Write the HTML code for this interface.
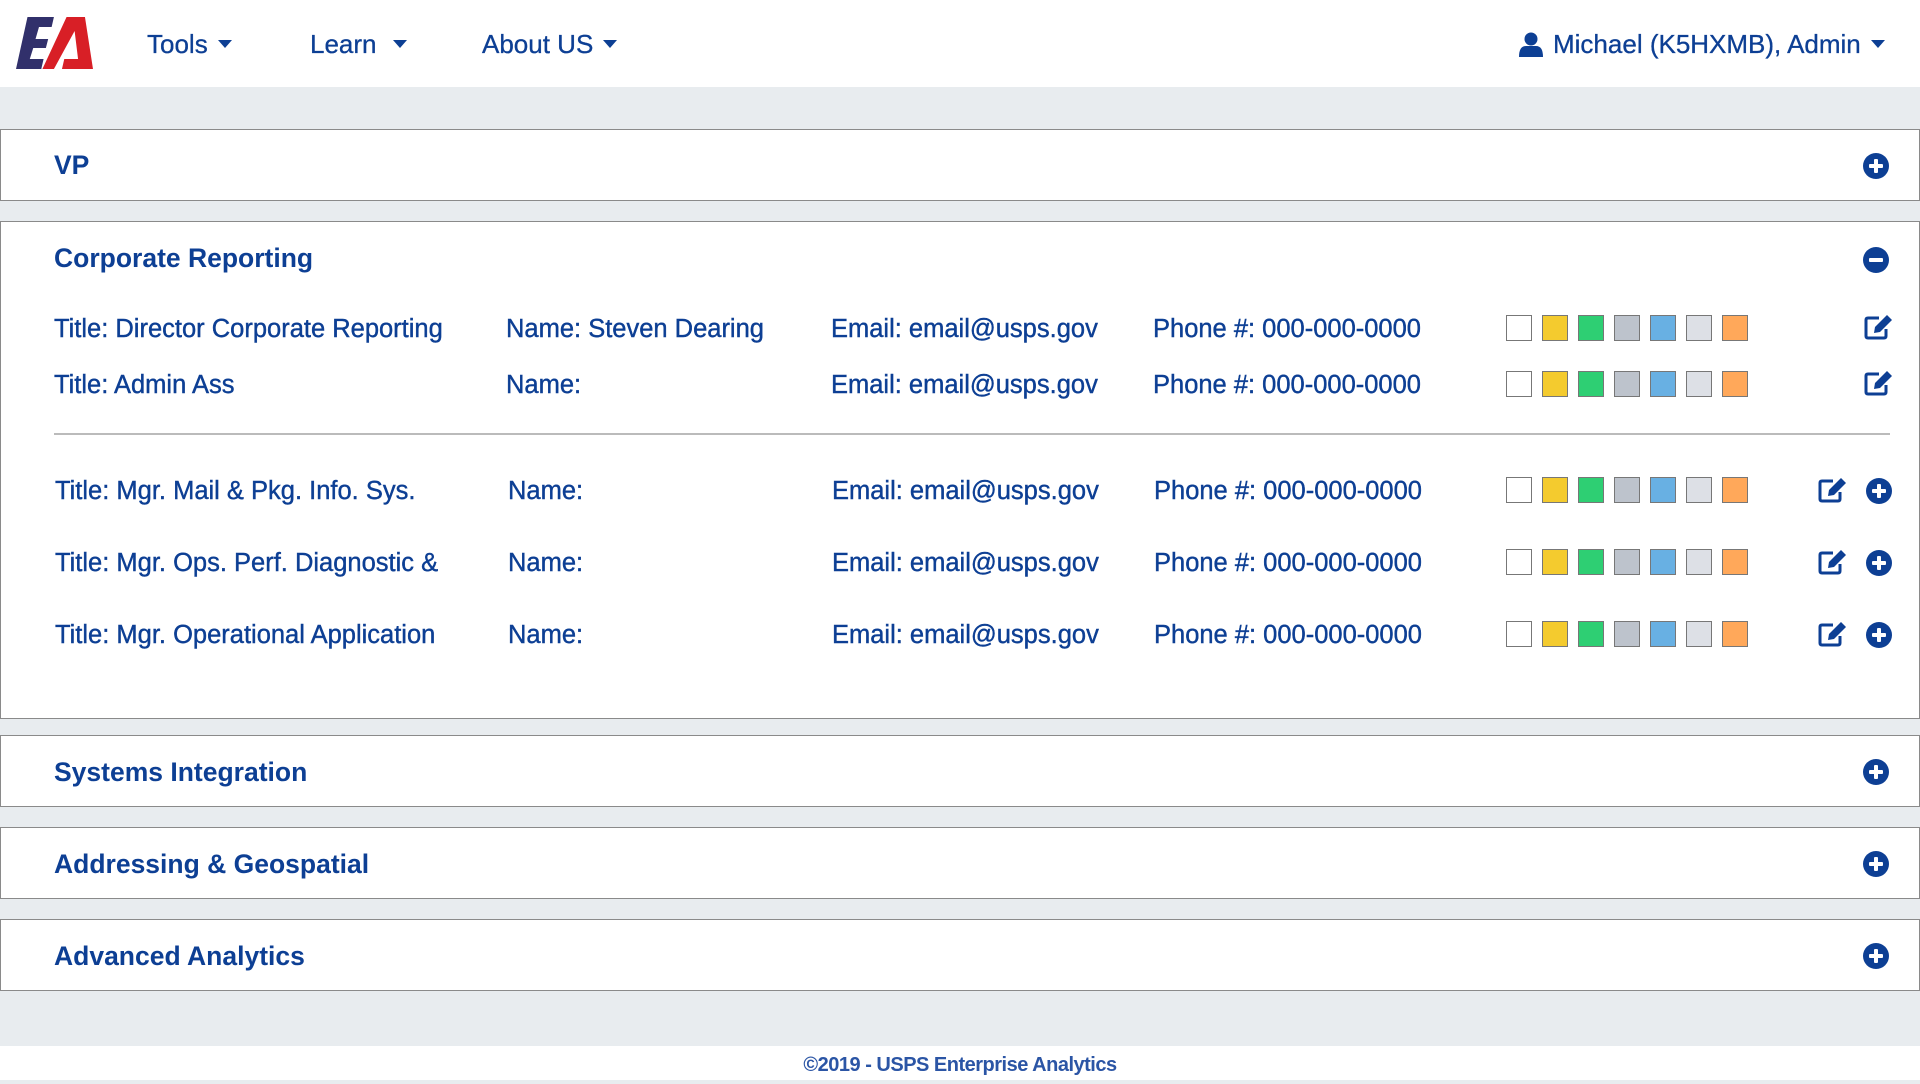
<!DOCTYPE html>
<html><head><meta charset="utf-8"><style>
*{margin:0;padding:0;box-sizing:border-box}
body{width:1920px;height:1080px;background:#e8ecef;font-family:"Liberation Sans",sans-serif;color:#0d3f94;position:relative;overflow:hidden}
.a{position:absolute;white-space:nowrap}
.nav{position:absolute;left:0;top:0;width:1920px;height:87px;background:#fff}
.nv{font-size:26px;top:29px;-webkit-text-stroke:0.3px #0d3f94}
.car{display:inline-block;width:0;height:0;border-left:7px solid transparent;border-right:7px solid transparent;border-top:8px solid #0d3f94;vertical-align:middle;margin-left:10px;position:relative;top:-2px}
.panel{position:absolute;left:0;width:1920px;background:#fff;border:1px solid #8a8a8a}
.h{font-size:26.5px;font-weight:bold;left:54px}
.r{font-size:25.5px;-webkit-text-stroke:0.4px #0d3f94}
.sw{position:absolute;width:26px;height:26px;border:1px solid #777}
.foot{position:absolute;left:0;top:1046px;width:1920px;height:34px;background:#fff;text-align:center;font-size:20px;font-weight:bold;line-height:38px;color:#2b55a5;letter-spacing:-0.5px}
</style></head><body>
<div class="nav"></div>
<svg class="a" style="left:16px;top:17px" width="77" height="52" viewBox="0 0 67 52" preserveAspectRatio="none">
<polygon points="10,0 33,0 31,10 20,10 17,22 28,22 26,31 15,31 12,42 24,42 22,52 0,52" fill="#31306b"/>
<polygon points="44,0 60,0 67,52 40,52 42,42 54,42 51,14 33,52 23,52" fill="#d81f26"/>
</svg>
<div class="a nv" style="left:147px">Tools<span class="car"></span></div>
<div class="a nv" style="left:310px">Learn<span class="car" style="margin-left:16px"></span></div>
<div class="a nv" style="left:482px">About US<span class="car"></span></div>
<svg class="a" style="left:1519px;top:32px" width="24" height="25" viewBox="0 0 24 25"><circle cx="12" cy="7" r="6.5" fill="#0d3f94"/><path d="M0 25 Q0 14 7 14 L17 14 Q24 14 24 25 Z" fill="#0d3f94"/></svg>
<div class="a nv" style="left:1553px;top:29px">Michael (K5HXMB), Admin<span class="car"></span></div>

<svg width="0" height="0" style="position:absolute"><defs>
<symbol id="plus" viewBox="0 0 26 26"><circle cx="13" cy="13" r="13" fill="#0d3f94"/><rect x="6" y="11" width="14" height="4" rx="1" fill="#fff"/><rect x="11" y="6" width="4" height="14" rx="1" fill="#fff"/></symbol>
<symbol id="minus" viewBox="0 0 26 26"><circle cx="13" cy="13" r="13" fill="#0d3f94"/><rect x="6" y="11" width="14" height="4" rx="1" fill="#fff"/></symbol>
<symbol id="edit" viewBox="0 0 30 26"><path d="M15 4 H4 Q2 4 2 6 V22 Q2 24 4 24 H20 Q22 24 22 22 V15" fill="none" stroke="#0d3f94" stroke-width="3"/><path d="M11 13 L23 1 L28 6 L16 18 L10 19 Z" fill="#0d3f94"/></symbol>
</defs></svg>

<div class="panel" style="top:129px;height:72px"></div>
<div class="a h" style="top:150px">VP</div>
<svg class="a" style="left:1863px;top:153px" width="26" height="26"><use href="#plus"/></svg>

<div class="panel" style="top:221px;height:498px"></div>
<div class="a h" style="top:243px">Corporate Reporting</div>
<svg class="a" style="left:1863px;top:247px" width="26" height="26"><use href="#minus"/></svg>
<div class="a" style="left:54px;top:433px;width:1836px;height:2px;background:#bbb"></div>

<div class="panel" style="top:735px;height:72px"></div>
<div class="a h" style="top:757px">Systems Integration</div>
<svg class="a" style="left:1863px;top:759px" width="26" height="26"><use href="#plus"/></svg>
<div class="panel" style="top:827px;height:72px"></div>
<div class="a h" style="top:849px">Addressing &amp; Geospatial</div>
<svg class="a" style="left:1863px;top:851px" width="26" height="26"><use href="#plus"/></svg>
<div class="panel" style="top:919px;height:72px"></div>
<div class="a h" style="top:941px">Advanced Analytics</div>
<svg class="a" style="left:1863px;top:943px" width="26" height="26"><use href="#plus"/></svg>

<div id="rows"></div>
<div class="foot">©2019 - USPS Enterprise Analytics</div>
<script>
var rows=[[328,"Title: Director Corporate Reporting","Name: Steven Dearing",0],[384,"Title: Admin Ass","Name:",0],[490,"Title: Mgr. Mail &amp; Pkg. Info. Sys.","Name:",1],[562,"Title: Mgr. Ops. Perf. Diagnostic &amp;","Name:",1],[634,"Title: Mgr. Operational Application","Name:",1]];
var cols=["#fff","#f4cb2e","#2ecf73","#bdc3cc","#68b0e3","#dde0e6","#ffa85a"];
var h="";
rows.forEach(function(r){var y=r[0],o=r[3];
h+='<div class="a r" style="left:'+(54+o)+'px;top:'+(y-13)+'px">'+r[1]+'</div>';
h+='<div class="a r" style="left:'+(506+o*2)+'px;top:'+(y-13)+'px">'+r[2]+'</div>';
h+='<div class="a r" style="left:'+(831+o)+'px;top:'+(y-13)+'px">Email: email@usps.gov</div>';
h+='<div class="a r" style="left:'+(1153+o)+'px;top:'+(y-13)+'px">Phone #: 000-000-0000</div>';
cols.forEach(function(c,i){h+='<div class="sw" style="left:'+(1506+i*36)+'px;top:'+(y-13)+'px;background:'+c+'"></div>';});
if(o){h+='<svg class="a" style="left:1818px;top:'+(y-13)+'px" width="30" height="26"><use href="#edit"/></svg>';
h+='<svg class="a" style="left:1866px;top:'+(y-12)+'px" width="26" height="26"><use href="#plus"/></svg>';}
else h+='<svg class="a" style="left:1864px;top:'+(y-14)+'px" width="30" height="26"><use href="#edit"/></svg>';
});
document.getElementById("rows").innerHTML=h;
</script>
</body></html>
